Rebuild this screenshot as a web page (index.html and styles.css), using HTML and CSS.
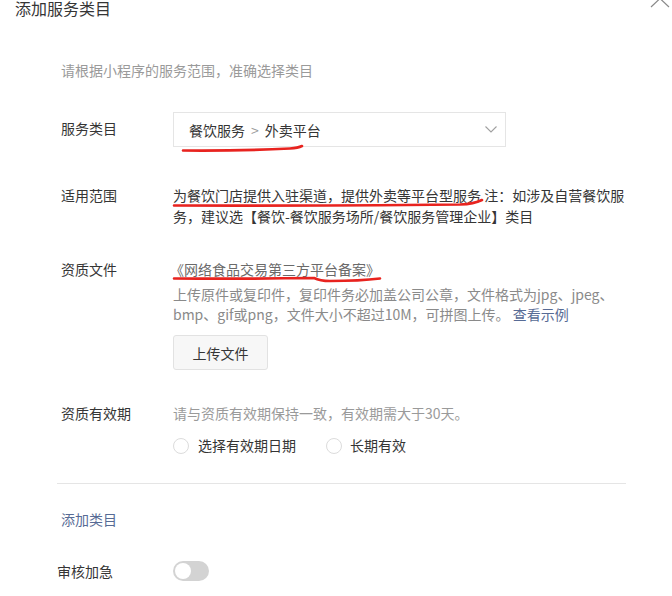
FILE: index.html
```html
<!DOCTYPE html>
<html lang="zh">
<head>
<meta charset="utf-8">
<link rel="stylesheet" href="styles.css">
</head>
<body>
<div class="page">
  <div class="header">
    <div class="title">添加服务类目</div>
    <svg class="collapse" width="20" height="10" viewBox="0 0 20 10"><path d="M1 9 L10 0.5 L19 9" fill="none" stroke="#8a8a8a" stroke-width="1.2"/></svg>
  </div>
  <div class="content">
    <div class="hint">请根据小程序的服务范围，准确选择类目</div>

    <div class="row row-select">
      <div class="label">服务类目</div>
      <div class="select">
        <span class="select-text">餐饮服务<span class="sep">&gt;</span>外卖平台</span>
        <svg class="arrow" width="12" height="7" viewBox="0 0 12 7"><path d="M0.5 0.5 L6 6 L11.5 0.5" fill="none" stroke="#a0a0a0" stroke-width="1.1"/></svg>
      </div>
    </div>

    <div class="row row-scope">
      <div class="label">适用范围</div>
      <div class="value">为餐饮门店提供入驻渠道，提供外卖等平台型服务 注：如涉及自营餐饮服<br>务，建议选【餐饮-餐饮服务场所/餐饮服务管理企业】类目</div>
    </div>

    <div class="row row-qual">
      <div class="label">资质文件</div>
      <div class="value">
        <div class="doc-name">《网络食品交易第三方平台备案》</div>
        <div class="desc">上传原件或复印件，复印件务必加盖公司公章，文件格式为jpg、jpeg、<br>bmp、gif或png，文件大小不超过10M，可拼图上传。 <a class="link">查看示例</a></div>
        <button class="btn">上传文件</button>
      </div>
    </div>

    <div class="row row-valid">
      <div class="label">资质有效期</div>
      <div class="value">
        <div class="muted">请与资质有效期保持一致，有效期需大于30天。</div>
        <div class="radios">
          <label class="radio"><span class="circle"></span>选择有效期日期</label>
          <label class="radio"><span class="circle"></span>长期有效</label>
        </div>
      </div>
    </div>

    <div class="divider"></div>

    <div class="add">添加类目</div>

    <div class="row row-urgent">
      <div class="label">审核加急</div>
      <div class="switch"><span class="knob"></span></div>
    </div>
  </div>

  <svg class="marks" width="672" height="596" viewBox="0 0 672 596">
    <path d="M183 150.5 Q240 151 290 148.5 Q298 148 302 146" fill="none" stroke="#e8231f" stroke-width="2.6" stroke-linecap="round"/>
    <path d="M174 205.5 Q300 206 460 204.5 Q474 204 482 200" fill="none" stroke="#e8231f" stroke-width="2.6" stroke-linecap="round"/>
    <path d="M174 278.5 Q250 279 314 278 Q320 281 330 281 Q360 281 380 278.5" fill="none" stroke="#e8231f" stroke-width="2.6" stroke-linecap="round"/>
  </svg>
</div>
</body>
</html>
```

FILE: styles.css
```css
html, body {
  margin: 0;
  padding: 0;
  background: #ffffff;
}
body {
  font-family: "Noto Sans CJK SC", "Noto Sans", sans-serif;
  font-size: 14px;
  color: #353535;
}
.page {
  position: relative;
  width: 672px;
  height: 596px;
  overflow: hidden;
}
.header {
  display: flex;
  justify-content: space-between;
  align-items: flex-start;
  height: 20px;
  padding: 0 2px 0 15px;
}
.title {
  font-size: 16px;
  line-height: 20px;
  margin-top: -2px;
  color: #353535;
}
.collapse {
  display: block;
  margin-top: -2px;
}
.content {
  padding: 0 32px 0 61px;
}
.hint {
  margin-top: 40px;
  line-height: 20px;
  color: #9a9a9a;
}
.row {
  display: flex;
}
.label {
  width: 112px;
  flex: none;
  color: #353535;
}
.value {
  flex: 1;
  line-height: 21px;
}
.row-select {
  margin-top: 32px;
  align-items: center;
}
.row-select .label {
  line-height: 20px;
  margin-top: -3px;
}
.select {
  box-sizing: border-box;
  width: 333px;
  height: 35px;
  border: 1px solid #e5e5e5;
  display: flex;
  align-items: center;
  justify-content: space-between;
  padding: 0 8px 0 15px;
}
.select-text {
  color: #353535;
  line-height: 20px;
}
.sep {
  color: #9a9a9a;
  margin: 0 6px;
}
.row-scope {
  margin-top: 38px;
}
.row-scope .label,
.row-qual .label,
.row-valid .label {
  line-height: 21px;
}
.row-scope .value {
  color: #353535;
}
.row-qual {
  margin-top: 32px;
}
.doc-name {
  color: #6a6a6a;
  margin-left: -3px;
}
.desc {
  margin-top: 4px;
  color: #8a8a8a;
  line-height: 20px;
}
.link {
  color: #576b95;
}
.btn {
  display: block;
  box-sizing: border-box;
  margin-top: 11px;
  width: 95px;
  height: 35px;
  border: 1px solid #e2e2e2;
  border-radius: 3px;
  background: #f7f7f7;
  font-family: inherit;
  font-size: 14px;
  color: #353535;
  padding: 0;
}
.row-valid {
  margin-top: 33px;
}
.muted {
  color: #9a9a9a;
}
.radios {
  display: flex;
  margin-top: 11px;
}
.radio {
  display: flex;
  align-items: center;
  color: #353535;
  line-height: 21px;
}
.radio:first-child {
  width: 153px;
}
.circle {
  box-sizing: border-box;
  width: 16px;
  height: 16px;
  border: 1px solid #dcdcdc;
  border-radius: 50%;
  margin-right: 9px;
  background: #fff;
}
.radio:last-child .circle {
  margin-right: 8px;
}
.divider {
  height: 1px;
  background: #e5e5e5;
  margin: 27px 14px 0 -4px;
}
.add {
  margin-top: 25px;
  line-height: 20px;
  color: #576b95;
}
.row-urgent {
  margin-top: 32px;
  margin-left: -4px;
  align-items: center;
}
.row-urgent .label {
  width: 116px;
  line-height: 20px;
}
.switch {
  position: relative;
  box-sizing: border-box;
  width: 36px;
  height: 20px;
  border-radius: 10px;
  background: #d3d3d3;
}
.knob {
  position: absolute;
  left: 2px;
  top: 2px;
  width: 16px;
  height: 16px;
  border-radius: 50%;
  background: #ffffff;
}
.marks {
  position: absolute;
  left: 0;
  top: 0;
  pointer-events: none;
}
```
